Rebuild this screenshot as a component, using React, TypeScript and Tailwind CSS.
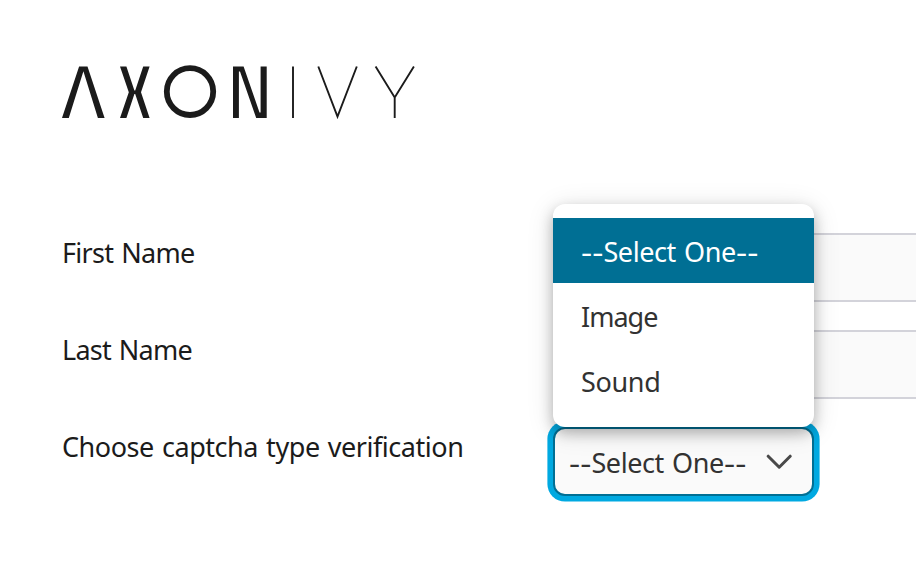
import type { ReactNode } from "react";

function Logo() {
  return (
    <svg className="block h-[56px] w-[356px]" viewBox="62 64 356 56" fill="#1b1b1b" role="img" aria-label="Axon Ivy">
      <path d="M62 118 79.1 66.5H87.5L104.6 118H97.9L83.4 71.2 68.8 118Z" />
      <path d="M120 66.5H126.4L134.4 90.4H135.2L143.2 66.5H149.6L141 92.2 149.6 118H143.2L135.2 94H134.4L126.4 118H120L128.8 92.2Z" />
      <ellipse cx="190" cy="91.6" rx="23.2" ry="23.4" fill="none" stroke="#1b1b1b" strokeWidth="5.8" />
      <path d="M233 118V66.5H243.6L259.5 112.5H260.6V66.5H266.7V118H256.2L240 71.6H238.9V118Z" />
      <g fill="none" stroke="#1b1b1b" strokeWidth="1.9">
        <path d="M293 66.5V118" />
        <path d="M318.3 66.5 337.5 116.6 356.8 66.5" />
        <path d="M375.6 66.5 394.7 97.4 413.9 66.5M394.7 97V118" />
      </g>
    </svg>
  );
}

function Fit({ text, width }: { text: string; width: number }) {
  return (
    <span
      className="inline-block whitespace-nowrap [word-spacing:1.5px]"
      ref={(el) => {
        if (!el) return;
        el.style.letterSpacing = "0px";
        const natural = el.getBoundingClientRect().width;
        el.style.letterSpacing = `${(width - natural) / text.length}px`;
      }}
    >
      {text}
    </span>
  );
}

function Dashes() {
  return <span className="inline-block w-[22.4px] origin-left scale-x-[1.28]">--</span>;
}

function SelectOne() {
  return (
    <span className="flex whitespace-nowrap">
      <Dashes />
      <Fit text="Select One" width={132.5} />
      <Dashes />
    </span>
  );
}

function Row({ label, width, children }: { label: string; width: number; children: ReactNode }) {
  return (
    <div className="flex h-[69px] items-start">
      <label className="w-[491px] shrink-0 whitespace-nowrap leading-[39px]">
        <Fit text={label} width={width} />
      </label>
      {children}
    </div>
  );
}

function CaptchaSelect() {
  return (
    <div className="relative h-[69px] w-[261px] rounded-[12px] border-2 border-[#006f94] bg-[#fafafa] text-[#323232] shadow-[0_0_0_5.6px_#00a9e1]">
      <div className="flex h-full items-center pl-[14px] pr-[20px]">
        <span className="pt-[4px]">
          <SelectOne />
        </span>
        <svg className="ml-auto h-[16px] w-[27px]" viewBox="0 0 27 16" fill="none" stroke="#494949" strokeWidth="3" strokeLinecap="round" strokeLinejoin="round">
          <path d="M3.2 2.2 14.2 13.2 25.2 2.2" />
        </svg>
      </div>
      <ul className="absolute -left-[2px] bottom-[67px] h-[223px] w-[261px] rounded-[12px] bg-white py-[14px] shadow-[0_6px_14px_rgba(0,0,0,0.26),0_4px_28px_rgba(0,0,0,0.12)]">
        <li className="flex h-[65px] items-center bg-[#006f94] pl-[28px] pt-[4px] text-white">
          <SelectOne />
        </li>
        <li className="flex h-[65px] items-center pl-[28px] pt-[4px]">
          <Fit text="Image" width={76.5} />
        </li>
        <li className="flex h-[65px] items-center pl-[28px] pt-[4px]">
          <Fit text="Sound" width={79.5} />
        </li>
      </ul>
    </div>
  );
}

export default function App() {
  return (
    <main className="h-[566px] w-[916px] overflow-hidden bg-white pl-[62px] pt-[64px] font-['Noto_Sans','Open_Sans',sans-serif] text-[27px] text-[#1b1b1b]">
      <Logo />
      <form className="mt-[113px] flex flex-col gap-[28px]">
        <Row label="First Name" width={132.5}>
          <div className="h-[69px] w-[420px] shrink-0 rounded-[12px] border-2 border-[#d3d3da] bg-[#fafafa]" />
        </Row>
        <Row label="Last Name" width={130}>
          <div className="h-[69px] w-[420px] shrink-0 rounded-[12px] border-2 border-[#d3d3da] bg-[#fafafa]" />
        </Row>
        <Row label="Choose captcha type verification" width={401.5}>
          <CaptchaSelect />
        </Row>
      </form>
    </main>
  );
}
